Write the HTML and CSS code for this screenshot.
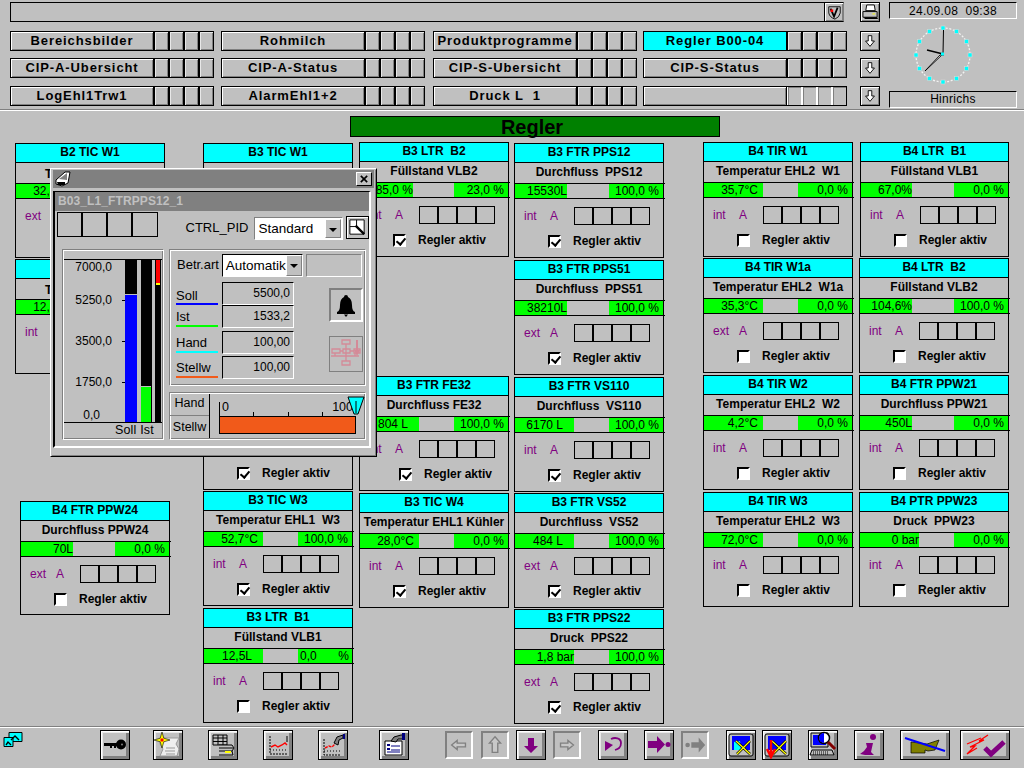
FILE: index.html
```html
<!DOCTYPE html>
<html lang="de">
<head>
<meta charset="utf-8">
<title>Regler</title>
<link rel="stylesheet" href="styles.css">
</head>
<body>
<header class="top">
  <div class="left">
    <div class="status">
      <div class="field"><button class="shield"><svg viewBox="0 0 17 17"><path d="M2 2h13v7q-1 5-6 7q-6-2-7-7z" fill="#c0c0c0" stroke="#000"/><path d="M4 4l4 9 4-10" fill="none" stroke="#000" stroke-width="2"/><path d="M4 5h3v3H4z" fill="#f00"/></svg></button></div>
      <button class="sq printer"><svg viewBox="0 0 18 18"><path d="M5 1h8l1 6H4z" fill="#fff" stroke="#000"/><path d="M1 8h15v6H1z" fill="#c0c0c0" stroke="#000"/><path d="M2 14h14l1 2H3z" fill="#000"/><path d="M11 10h3v1h-3z" fill="#ff0"/></svg></button>
    </div>
    <nav class="navrow">
      <div class="nav"><button class="main">Bereichsbilder</button><s></s><s></s><s></s><s></s></div>
      <div class="nav"><button class="main">Rohmilch</button><s></s><s></s><s></s><s></s></div>
      <div class="nav"><button class="main">Produktprogramme</button><s></s><s></s><s></s><s></s></div>
      <div class="nav"><button class="main act">Regler B00-04</button><s></s><s></s><s></s><s></s></div>
      <button class="sq"><svg viewBox="0 0 18 18"><path d="M7 3h4v6h3l-5 6-5-6h3z" fill="#fff" stroke="#000"/></svg></button>
    </nav>
    <nav class="navrow">
      <div class="nav"><button class="main">CIP-A-Ubersicht</button><s></s><s></s><s></s><s></s></div>
      <div class="nav"><button class="main">CIP-A-Status</button><s></s><s></s><s></s><s></s></div>
      <div class="nav"><button class="main">CIP-S-Ubersicht</button><s></s><s></s><s></s><s></s></div>
      <div class="nav"><button class="main">CIP-S-Status</button><s></s><s></s><s></s><s></s></div>
      <button class="sq"><svg viewBox="0 0 18 18"><path d="M7 3h4v6h3l-5 6-5-6h3z" fill="#fff" stroke="#000"/></svg></button>
    </nav>
    <nav class="navrow third">
      <div class="nav"><button class="main">LogEhl1Trw1</button><s></s><s></s><s></s><s></s></div>
      <div class="nav"><button class="main">AlarmEhl1+2</button><s></s><s></s><s></s><s></s></div>
      <div class="nav"><button class="main">Druck L  1</button><s></s><s></s><s></s><s></s></div>
      <div class="nav off"><button class="main"></button><s></s><s></s><s></s><s></s></div>
      <button class="sq"><svg viewBox="0 0 18 18"><path d="M7 3h4v6h3l-5 6-5-6h3z" fill="#fff" stroke="#000"/></svg></button>
    </nav>
  </div>
  <div class="right">
    <div class="info">24.09.08  09:38</div>
    <svg class="clock" viewBox="0 0 128 72">
      <circle cx="54" cy="36" r="27" fill="none" stroke="#f2f2f2" stroke-width="1.300" stroke-dasharray="2 1.600"/>
      <g fill="#00ffff" stroke="#d8d8d8" stroke-width=".6">
        <rect x="52" y="7" width="4" height="4"/><rect x="65.500" y="10.500" width="4" height="4"/><rect x="75.500" y="20.500" width="4" height="4"/><rect x="79" y="34" width="4" height="4"/><rect x="75.500" y="47.500" width="4" height="4"/><rect x="65.500" y="57.500" width="4" height="4"/><rect x="52" y="61" width="4" height="4"/><rect x="38.500" y="57.500" width="4" height="4"/><rect x="28.500" y="47.500" width="4" height="4"/><rect x="25" y="34" width="4" height="4"/><rect x="28.500" y="20.500" width="4" height="4"/><rect x="38.500" y="10.500" width="4" height="4"/>
      </g>
      <path d="M54 35 L54.500 11" stroke="#000" stroke-width="1"/>
      <path d="M54 35 L38 31" stroke="#000" stroke-width="1.600"/>
      <path d="M54 35 L36 52 L51 36 L55 36" stroke="#000" stroke-width=".9" fill="#fff"/>
      <rect x="52" y="33.500" width="3" height="3" fill="#00ffff"/>
    </svg>
    <div class="info low">Hinrichs</div>
  </div>
</header>
<div class="sep"></div>
<h1 class="title">Regler</h1>

<main class="board">
  <section class="col">
    <article class="card"><h3>B2 TIC W1</h3><p class="name drop">Temperatur  W1</p><div class="val"><span class="lv" style="width:59px">32,4°C</span><span class="rv"></span></div><div class="mode"><span class="m1">ext</span></div></article>
    <article class="card up"><h3></h3><p class="name drop">Temperatur  W2</p><div class="val"><span class="lv" style="width:59px">12,1°C</span><span class="rv"></span></div><div class="mode"><span class="m1">int</span></div></article>
    <article class="card shift"><h3>B4 FTR PPW24</h3><p class="name">Durchfluss PPW24</p><div class="val"><span class="lv flush" style="width:52px">70L</span><span class="rv">0,0 %</span></div><div class="mode"><span class="m1">ext</span><span class="m2">A</span><div class="seg"><u></u><u></u><u></u><u></u></div></div><div class="reg"><span class="cb"></span>Regler aktiv</div></article>
  </section>
  <section class="col">
    <article class="card"><h3>B3 TIC W1</h3></article>
    <article class="card up"></article>
    <article class="card up tail"><div class="reg"><span class="cb on"></span>Regler aktiv</div></article>
    <article class="card up"><h3>B3 TIC W3</h3><p class="name">Temperatur EHL1  W3</p><div class="val"><span class="lv" style="width:59px">52,7°C</span><span class="rv">100,0 %</span></div><div class="mode"><span class="m1">int</span><span class="m2">A</span><div class="seg"><u></u><u></u><u></u><u></u></div></div><div class="reg"><span class="cb on"></span>Regler aktiv</div></article>
    <article class="card"><h3>B3 LTR  B1</h3><p class="name">Füllstand VLB1</p><div class="val"><span class="lv wide" style="width:59px">12,5L</span><span class="rv split"><span>0,0</span><span>%</span></span></div><div class="mode"><span class="m1">int</span><span class="m2">A</span><div class="seg"><u></u><u></u><u></u><u></u></div></div><div class="reg"><span class="cb"></span>Regler aktiv</div></article>
  </section>
  <section class="col col3">
    <article class="card"><h3>B3 LTR  B2</h3><p class="name">Füllstand VLB2</p><div class="val"><span class="lv flush" style="width:53px">85,0 %</span><span class="rv">23,0 %</span></div><div class="mode"><span class="m1">int</span><span class="m2">A</span><div class="seg"><u></u><u></u><u></u><u></u></div></div><div class="reg"><span class="cb on"></span>Regler aktiv</div></article>
    <article class="card after-gap"><h3>B3 FTR FE32</h3><p class="name">Durchfluss FE32</p><div class="val"><span class="lv wide" style="width:59px">804 L</span><span class="rv">100,0 %</span></div><div class="mode"><span class="m1">int</span><span class="m2">A</span><div class="seg"><u></u><u></u><u></u><u></u></div></div><div class="reg inset"><span class="cb on"></span>Regler aktiv</div></article>
    <article class="card"><h3>B3 TIC W4</h3><p class="name">Temperatur EHL1 Kühler</p><div class="val"><span class="lv" style="width:59px">28,0°C</span><span class="rv">0,0 %</span></div><div class="mode"><span class="m1">int</span><span class="m2">A</span><div class="seg"><u></u><u></u><u></u><u></u></div></div><div class="reg"><span class="cb on"></span>Regler aktiv</div></article>
  </section>
  <section class="col">
    <article class="card"><h3>B3 FTR PPS12</h3><p class="name">Durchfluss  PPS12</p><div class="val"><span class="lv flush" style="width:52px">15530L</span><span class="rv">100,0 %</span></div><div class="mode"><span class="m1">int</span><span class="m2">A</span><div class="seg"><u></u><u></u><u></u><u></u></div></div><div class="reg"><span class="cb on"></span>Regler aktiv</div></article>
    <article class="card"><h3>B3 FTR PPS51</h3><p class="name">Durchfluss  PPS51</p><div class="val"><span class="lv flush" style="width:52px">38210L</span><span class="rv">100,0 %</span></div><div class="mode"><span class="m1">ext</span><span class="m2">A</span><div class="seg"><u></u><u></u><u></u><u></u></div></div><div class="reg"><span class="cb on"></span>Regler aktiv</div></article>
    <article class="card"><h3>B3 FTR VS110</h3><p class="name">Durchfluss  VS110</p><div class="val"><span class="lv wide" style="width:59px">6170 L</span><span class="rv">100,0 %</span></div><div class="mode"><span class="m1">int</span><span class="m2">A</span><div class="seg"><u></u><u></u><u></u><u></u></div></div><div class="reg"><span class="cb on"></span>Regler aktiv</div></article>
    <article class="card up"><h3>B3 FTR VS52</h3><p class="name">Durchfluss  VS52</p><div class="val"><span class="lv wide" style="width:59px">484 L</span><span class="rv">100,0 %</span></div><div class="mode"><span class="m1">ext</span><span class="m2">A</span><div class="seg"><u></u><u></u><u></u><u></u></div></div><div class="reg"><span class="cb on"></span>Regler aktiv</div></article>
    <article class="card up"><h3>B3 FTR PPS22</h3><p class="name">Druck  PPS22</p><div class="val"><span class="lv flush" style="width:59px">1,8 bar</span><span class="rv">100,0 %</span></div><div class="mode"><span class="m1">ext</span><span class="m2">A</span><div class="seg"><u></u><u></u><u></u><u></u></div></div><div class="reg"><span class="cb on"></span>Regler aktiv</div></article>
  </section>
  <section class="col">
    <article class="card"><h3>B4 TIR W1</h3><p class="name">Temperatur EHL2  W1</p><div class="val"><span class="lv" style="width:59px">35,7°C</span><span class="rv">0,0 %</span></div><div class="mode"><span class="m1">int</span><span class="m2">A</span><div class="seg"><u></u><u></u><u></u><u></u></div></div><div class="reg"><span class="cb"></span>Regler aktiv</div></article>
    <article class="card up"><h3>B4 TIR W1a</h3><p class="name">Temperatur EHL2  W1a</p><div class="val"><span class="lv" style="width:59px">35,3°C</span><span class="rv">0,0 %</span></div><div class="mode"><span class="m1">ext</span><span class="m2">A</span><div class="seg"><u></u><u></u><u></u><u></u></div></div><div class="reg"><span class="cb"></span>Regler aktiv</div></article>
    <article class="card"><h3>B4 TIR W2</h3><p class="name">Temperatur EHL2  W2</p><div class="val"><span class="lv" style="width:59px">4,2°C</span><span class="rv">0,0 %</span></div><div class="mode"><span class="m1">int</span><span class="m2">A</span><div class="seg"><u></u><u></u><u></u><u></u></div></div><div class="reg"><span class="cb"></span>Regler aktiv</div></article>
    <article class="card"><h3>B4 TIR W3</h3><p class="name">Temperatur EHL2  W3</p><div class="val"><span class="lv" style="width:59px">72,0°C</span><span class="rv">0,0 %</span></div><div class="mode"><span class="m1">int</span><span class="m2">A</span><div class="seg"><u></u><u></u><u></u><u></u></div></div><div class="reg"><span class="cb"></span>Regler aktiv</div></article>
  </section>
  <section class="col">
    <article class="card first-off"><h3>B4 LTR  B1</h3><p class="name">Füllstand VLB1</p><div class="val"><span class="lv flush" style="width:51px">67,0%</span><span class="rv">0,0 %</span></div><div class="mode"><span class="m1">int</span><span class="m2">A</span><div class="seg"><u></u><u></u><u></u><u></u></div></div><div class="reg"><span class="cb"></span>Regler aktiv</div></article>
    <article class="card up"><h3>B4 LTR  B2</h3><p class="name">Füllstand VLB2</p><div class="val"><span class="lv flush" style="width:52px">104,6%</span><span class="rv">100,0 %</span></div><div class="mode"><span class="m1">int</span><span class="m2">A</span><div class="seg"><u></u><u></u><u></u><u></u></div></div><div class="reg"><span class="cb"></span>Regler aktiv</div></article>
    <article class="card"><h3>B4 FTR PPW21</h3><p class="name">Durchfluss PPW21</p><div class="val"><span class="lv flush" style="width:52px">450L</span><span class="rv">0,0 %</span></div><div class="mode"><span class="m1">int</span><span class="m2">A</span><div class="seg"><u></u><u></u><u></u><u></u></div></div><div class="reg"><span class="cb"></span>Regler aktiv</div></article>
    <article class="card"><h3>B4 PTR PPW23</h3><p class="name">Druck  PPW23</p><div class="val"><span class="lv flush" style="width:59px">0 bar</span><span class="rv">0,0 %</span></div><div class="mode"><span class="m1">int</span><span class="m2">A</span><div class="seg"><u></u><u></u><u></u><u></u></div></div><div class="reg"><span class="cb"></span>Regler aktiv</div></article>
  </section>
</main>

<div class="sep"></div>
<footer class="tools">
  <svg class="winicon" viewBox="0 0 20 15"><path d="M6 .5h13v9H6z" fill="#0ff" stroke="#000"/><path d="M1 5.500h9v9H1z" fill="#0ff" stroke="#000"/><path d="M8 8l4-4 4 4M3 13l2-3 3 3" fill="none" stroke="#000" stroke-width="1.400"/></svg>
  <button class="tb m65"><svg viewBox="0 0 28 28"><path d="M3 12h14v3h-2v2h-2v-2h-2v2H9v-2H3z" fill="#000"/><circle cx="20" cy="13.500" r="5" fill="#000"/><circle cx="21" cy="13.500" r="1" fill="#808080"/></svg></button>
  <button class="tb m23"><svg viewBox="0 0 28 28"><path d="M6 7h19l-3 6 3 5-2 7H6l3-7-3-5z" fill="#eee" stroke="#999"/><path d="M12 17h9M11 20h10M12 23h9" stroke="#999"/><path d="M8 1l1.800 6.200L16 9l-6.200 1.800L8 17l-1.800-6.200L0 9l6.200-1.800z" fill="#ff0" stroke="#000" stroke-width=".6"/><rect x="6.500" y="7.500" width="3" height="3" fill="#f00"/></svg></button>
  <button class="tb m25"><svg viewBox="0 0 28 28"><path d="M4 4h14v10H4z" fill="#c0c0c0" stroke="#000"/><path d="M4 7h14M4 10.500h14M9 4v10M14 4v10" stroke="#000"/><path d="M10 14h13l2 3-2 3 1 4H10" fill="#c0c0c0" stroke="#000"/><path d="M10 17h14M10 20h13" stroke="#000"/><path d="M16 20h6v2h-6z" fill="#ff0"/></svg></button>
  <button class="tb m25"><svg viewBox="0 0 28 28"><path d="M6 5v18h18" fill="none" stroke="#000" stroke-dasharray="2 1"/><path d="M6 19h18" stroke="#000" stroke-dasharray="1 2"/><path d="M7 16l4-2 3 2 4-2 3-2 2 2" fill="none" stroke="#f00" stroke-width="1.400"/><path d="M23 5v6" stroke="#000"/></svg></button>
  <button class="tb m25"><svg viewBox="0 0 28 28"><path d="M5 8v16h16" fill="none" stroke="#000" stroke-dasharray="2 1"/><path d="M5 20h16" stroke="#000" stroke-dasharray="1 2"/><path d="M6 17l4-2 3 1 3-3" fill="none" stroke="#f00" stroke-width="1.400" stroke-dasharray="3 1"/><path d="M15 12l3-6 6-2v3l-4 2-1 5z" fill="#808080" stroke="#000"/><path d="M25 3v5" stroke="#000080" stroke-width="2"/></svg></button>
  <button class="tb m31"><svg viewBox="0 0 28 28"><path d="M5 10h17v14H5z" fill="#fff" stroke="#000"/><path d="M7 13h3v2H7zM7 17h3v2H7z" fill="#000080"/><path d="M11 15h9M11 19h9M7 21h13" stroke="#000080"/><path d="M11 10l3-4 7-2h3v4h-6l-2 3z" fill="#808080" stroke="#000"/><path d="M22 2h3v7h-3z" fill="#000080"/></svg></button>
  <button class="tb dis m36"><svg viewBox="0 0 26 26"><path d="M5 13l6-5v3h9v4h-9v3z" fill="#c8c8c8" stroke="#808080" stroke-width="1.500"/></svg></button>
  <button class="tb dis m8"><svg viewBox="0 0 26 26"><path d="M13 4l6 7h-3v10h-6V11H7z" fill="#c8c8c8" stroke="#808080" stroke-width="1.500"/></svg></button>
  <button class="tb m7"><svg viewBox="0 0 28 28"><path d="M11 7h6v8h4l-7 7-7-7h4z" fill="#800080"/></svg></button>
  <button class="tb dis m7"><svg viewBox="0 0 26 26"><path d="M20 13l-6-5v3H6v4h8v3z" fill="#c8c8c8" stroke="#808080" stroke-width="1.500"/></svg></button>
  <button class="tb m17"><svg viewBox="0 0 28 28"><path d="M12 8c4-2 10-1 10 4s-3 6-6 7" fill="none" stroke="#800080" stroke-width="1.800"/><path d="M6 10l8 4-8 6z" fill="#800080"/></svg></button>
  <button class="tb m16"><svg viewBox="0 0 28 28"><path d="M3 10h9V5l8 8.500-8 8.500v-5H3z" fill="#800080"/><circle cx="23" cy="13.500" r="2.500" fill="#800080"/></svg></button>
  <button class="tb dis m7"><svg viewBox="0 0 26 26"><circle cx="5" cy="13" r="2.500" fill="#808080"/><path d="M9 10h8V5l7 8-7 8v-5H9z" fill="#808080"/></svg></button>
  <button class="tb m17"><svg viewBox="0 0 28 28"><path d="M4 3h20q2 0 2 2v18q0 2-2 2H4q-2 0-2-2V5q0-2 2-2z" fill="#c0c0c0" stroke="#000"/><path d="M5 5h18v14H5z" fill="#0000ff"/><path d="M7 11l6-1 1 9H7z" fill="#0ff"/><path d="M9 10l14 13M10 23L23 10" stroke="#000" stroke-width="2.500"/><path d="M9 10l14 13M10 23L23 10" stroke="#ff0" stroke-width="1.300"/></svg></button>
  <button class="tb m6"><svg viewBox="0 0 28 28"><path d="M4 3h20q2 0 2 2v18q0 2-2 2H4q-2 0-2-2V5q0-2 2-2z" fill="#c0c0c0" stroke="#000"/><path d="M5 5h18v14H5z" fill="#0000ff"/><path d="M9 10l14 13M10 23L23 10" stroke="#000" stroke-width="2.500"/><path d="M9 10l14 13M10 23L23 10" stroke="#ff0" stroke-width="1.300"/><path d="M8 9v14m-4-5l4 8 4-8" fill="none" stroke="#f00" stroke-width="2.500"/></svg></button>
  <button class="tb m16"><svg viewBox="0 0 28 28"><path d="M2 2h17v14H2z" fill="#c0c0c0" stroke="#000"/><path d="M4 4h13v10H4z" fill="#0000ff"/><path d="M3 19h20l2 5H1z" fill="#c0c0c0" stroke="#000"/><path d="M4 21h15M4 23h15" stroke="#000" stroke-dasharray="1 1"/><circle cx="15" cy="7" r="5.500" fill="#fff" stroke="#000" stroke-width="1.500"/><path d="M15 2a5 5 0 0 0 0 10z" fill="#0000ff"/><path d="M19 11l7 7" stroke="#800000" stroke-width="3"/></svg></button>
  <button class="tb m16"><svg viewBox="0 0 28 28"><circle cx="18" cy="6" r="3" fill="#800080"/><path d="M11 12h7l-2 9 3 3h-9l-5-1 4-3 3-4z" fill="#800080"/></svg></button>
  <button class="tb wide m16"><svg viewBox="0 0 48 28"><path d="M10 11l16 2 12-4-4 10-7 1-3-1v3H10z" fill="#808000" stroke="#000" stroke-width=".7"/><path d="M4 7l40 13" stroke="#0000ff" stroke-width="2"/></svg></button>
  <button class="tb wide m10"><svg viewBox="0 0 48 28"><path d="M24 17l6 6 13-12" fill="none" stroke="#800080" stroke-width="5"/><path d="M27 4l-9 6 5-1-14 7 5-1-8 8 10-6" fill="none" stroke="#f00" stroke-width="1.300"/><path d="M6 13l14-6" stroke="#f00" stroke-width="1.300"/></svg></button>
</footer>

<aside class="win">
  <div class="wintitle">
    <svg class="wi" viewBox="0 0 16 16"><path d="M1 9l9-8h5l-2 11-6 3-6-2z" fill="#fff" stroke="#000"/><path d="M4 8l8-6v7z" fill="#808080"/><path d="M2 11h8v3H3z" fill="#000"/></svg>
    <button class="close"><svg viewBox="0 0 13 11"><path d="M3 2l7 7M10 2l-7 7" stroke="#000" stroke-width="1.800"/></svg></button>
  </div>
  <div class="pane">
    <div class="panetitle">B03_L1_FTRPPS12_1</div>
    <div class="ctrlrow">
      <div class="seg big"><u></u><u></u><u></u><u></u></div>
      <span class="ctrllabel">CTRL_PID</span>
      <div class="select std"><span>Standard</span><i></i></div>
      <button class="zoombtn"><svg viewBox="0 0 20 20"><path d="M2 2h15v15H2z" fill="#fff" stroke="#000"/><path d="M2 9h7V2" fill="#fff" stroke="#000"/><path d="M8 8l9 9" stroke="#000" stroke-width="2.500"/></svg></button>
    </div>
    <div class="main-area">
      <div class="group chart">
        <div class="plot">
          <div class="scale"><span>7000,0</span><span>5250,0</span><span>3500,0</span><span>1750,0</span><span>0,0</span></div>
          <div class="bar"><div class="fill blue" style="height:128px"></div></div>
          <div class="bar b2"><div class="fill grn" style="height:36px"></div></div>
          <div class="bar b3"><div class="rd"></div><div class="yl"></div></div>
        </div>
        <div class="legend">Soll Ist</div>
      </div>
      <div class="rightcol">
        <div class="group params">
          <div class="betr">
            <span class="betrlabel">Betr.art</span>
            <div class="select auto"><span>Automatik</span><i></i></div>
            <div class="blank"></div>
          </div>
          <div class="paramsbody">
            <div class="rows">
              <div class="prow"><span class="plabel l-blue">Soll</span><span class="pval">5500,0</span></div>
              <div class="prow"><span class="plabel l-green">Ist</span><span class="pval">1533,2</span></div>
              <div class="prow gapped"><span class="plabel l-cyan">Hand</span><span class="pval">100,00</span></div>
              <div class="prow gapped"><span class="plabel l-orange">Stellw</span><span class="pval">100,00</span></div>
            </div>
            <div class="side">
              <div class="sunk bell"><svg viewBox="0 0 30 30"><path d="M15 5q2 0 2 2q4 2 4 8t3 7v2H6v-2q3-1 3-7t4-8q0-2 2-2z" fill="#000"/><path d="M13 24.500h4l-2 2.500z" fill="#000"/></svg></div>
              <div class="sunk net"><svg viewBox="0 0 32 32"><g fill="none" stroke="#d48a98" stroke-width="1.300"><path d="M12 3h8v4h-8zM2 12h8v4H2zM13 12h7v4h-7zM24 12h6v4h-6zM12 24h8v4h-8zM1 19h28M16 7v17M5 16v3M25 16v3M10 14h3M20 14h4"/></g><path d="M26 3v10h-2l3 6 3-6h-2V3z" fill="#d48a98"/></svg></div>
            </div>
          </div>
        </div>
        <div class="group handbox">
          <div class="hands"><span>Hand</span><span>Stellw</span></div>
          <div class="slider">
            <div class="ticks"><span class="t0">0</span><span class="t100">100</span><em></em><em></em><em></em></div>
            <div class="orange"></div>
            <svg class="pointer" viewBox="0 0 18 20"><path d="M1 1h16l-6 17h-4z" fill="#00ffff" stroke="#000"/><path d="M9 5v12" stroke="#000"/></svg>
          </div>
        </div>
      </div>
    </div>
  </div>
</aside>
</body>
</html>
```

FILE: styles.css
```css
* { box-sizing: border-box; }
html, body { margin: 0; padding: 0; }
body {
  position: relative;
  width: 1024px;
  height: 768px;
  overflow: hidden;
  background: #c0c0c0;
  font-family: "Liberation Sans", Arial, sans-serif;
  font-size: 12px;
  color: #000;
}
button { margin: 0; padding: 0; font-family: inherit; background: #c0c0c0; color: #000; border: 0; }

/* header */
.top { display: flex; height: 109px; }
.left { width: 880px; padding-left: 10px; }
.status { display: flex; margin-top: 2px; }
.field {
  width: 834px; height: 20px;
  border: 1px solid #000; border-right-color: #808080;
  display: flex; justify-content: flex-end;
}
.shield {
  width: 19px; height: 18px;
  border-left: 1px solid #000;
  box-shadow: inset 1px 1px 0 #fff, inset -1px -1px 0 #808080;
  display: flex; align-items: center; justify-content: center;
}
.shield svg { width: 15px; height: 15px; }
.sq {
  width: 20px; height: 20px;
  border: 1px solid #000;
  box-shadow: inset 1px 1px 0 #fff, inset -1px -1px 0 #808080;
  display: flex; align-items: center; justify-content: center;
}
.sq svg { width: 16px; height: 16px; display: block; }
.printer { margin-left: 16px; }
.printer svg { width: 17px; height: 17px; }
.navrow { display: flex; margin-top: 7px; height: 20px; white-space: pre; }
.status + .navrow { margin-top: 9px; }
.navrow.third { margin-top: 8px; }
.nav { display: flex; width: 204px; height: 20px; border: 1px solid #000; }
.navrow .nav:nth-child(1) { margin-right: 7px; }
.navrow .nav:nth-child(2) { margin-right: 8px; }
.navrow .nav:nth-child(3) { margin-right: 6px; }
.navrow .nav:nth-child(4) { margin-right: 13px; }
.main {
  width: 143px; height: 18px;
  border-right: 1px solid #000;
  box-shadow: inset 1px 1px 0 #fff, inset -1px -1px 0 #808080;
  font-size: 13px; font-weight: 700; letter-spacing: .9px;
  white-space: pre; line-height: 16px;
}
.main.act { background: #00ffff; box-shadow: none; }
.nav s {
  display: block; flex: 1; text-decoration: none;
  border-left: 1px solid #000; border-right: 1px solid #000;
  box-shadow: inset 1px 1px 0 #e8e8e8, inset -1px -1px 0 #808080;
}
.nav s:last-child { border-right: 0; }
.nav.off s { border-color: #fff; box-shadow: inset 1px 1px 0 #808080; }
.right { margin-left: 9px; width: 128px; }
.info {
  height: 17px; text-align: center; line-height: 16px; white-space: pre;
  border: 1px solid; border-color: #000 #fff #fff #000;
  letter-spacing: .3px;
}
.info.low { line-height: 14px; }
.right .info:first-child { margin-top: 2px; }
.clock { display: block; width: 128px; height: 72px; }
.sep { height: 2px; background: linear-gradient(#808080 50%, #fff 50%); }

.title {
  width: 370px; height: 21px; margin: 5px 0 0 350px;
  background: #008000; border: 1px solid #000;
  font-size: 20px; line-height: 20px; font-weight: 700; text-align: center; padding-right: 6px;
}

/* board */
.board {
  display: grid;
  grid-template-columns: 188px 156px 155px 189px 156px 150px;
  padding: 5px 0 0 15px;
  height: 589px;
}
.col { display: flex; flex-direction: column; gap: 2px; }
.col:first-child .shift { margin: 125px 0 0 5px; height: 114px; }
.col3 .after-gap { margin-top: 117px; }
.card {
  width: 150px; height: 115px; flex: none;
  border: 1px solid #000;
}
.col:nth-child(2) .card:first-child,
.col:nth-child(1) .card:first-child,
.col:nth-child(4) .card:first-child { margin-top: 1px; }
.card.up { margin-top: -1px; }
.card.tail { display: flex; flex-direction: column; justify-content: flex-end; padding-bottom: 9px; }
.card.first-off { margin-left: 1px; width: 149px; }
.card h3 {
  margin: 0; height: 19px;
  background: #00ffff; border-bottom: 1px solid #000;
  font-size: 12px; font-weight: 700; text-align: center; line-height: 16px; white-space: pre;
}
.name {
  margin: 0; height: 20px;
  font-weight: 700; text-align: center; line-height: 19px; white-space: pre;
}
.name.drop { line-height: 23px; }
.val {
  display: flex; justify-content: space-between; height: 16px; line-height: 14px;
  margin-right: -2px; padding-right: 2px;
  border-top: 1px solid #000; border-bottom: 1px solid #000;
  white-space: pre;
}
.lv { background: #00ff00; text-align: right; padding-right: 5px; }
.lv.flush { padding-right: 0; }
.lv.wide { padding-right: 11px; }
.rv { background: #00ff00; width: 54px; text-align: right; padding-right: 4px; }
.rv.split { display: flex; justify-content: space-between; padding: 0 3px 0 2px; }
.mode { display: flex; align-items: center; height: 18px; margin-top: 8px; padding-left: 9px; color: #800080; }
.m1 { width: 26px; }
.m2 { width: 24px; }
.seg { display: flex; width: 76px; height: 18px; border: 1px solid #000; }
.seg u { display: block; flex: 1; text-decoration: none; border-left: 2px solid #000; }
.seg u:first-child { border-left: 0; }
.reg { display: flex; align-items: center; height: 14px; margin-top: 9px; padding-left: 33px; font-weight: 700; white-space: pre; }
.reg.inset { padding-left: 39px; }
.cb {
  position: relative; width: 13px; height: 13px; margin-right: 12px;
  background: #fff; border: 2px solid; border-color: #000 #fff #fff #000;
}
.cb.on::after {
  content: ""; position: absolute; left: 3px; top: 0; width: 4px; height: 7px;
  border: solid #000; border-width: 0 2px 2px 0; transform: rotate(40deg);
}

/* footer */
.tools { display: flex; align-items: center; height: 34px; }
.winicon { width: 20px; height: 15px; margin: -11px 0 0 3px; flex: none; }
.tb {
  width: 30px; height: 30px; flex: none;
  border: 1px solid #000;
  box-shadow: inset 1px 1px 0 #fff, inset 2px 2px 0 #e8e8e8, inset -3px -3px 0 #808080;
}
.tb svg { display: block; width: 28px; height: 28px; }
.tb.wide { width: 50px; }
.tb.wide svg { width: 48px; }
.tb.dis {
  width: 28px; height: 28px;
  border: 2px solid; border-color: #808080 #fff #fff #808080;
  box-shadow: none;
}
.tb.dis svg { width: 24px; height: 24px; }
.m6 { margin-left: 6px; } .m7 { margin-left: 7px; } .m8 { margin-left: 8px; }
.m10 { margin-left: 10px; } .m16 { margin-left: 16px; } .m17 { margin-left: 17px; }
.m23 { margin-left: 23px; } .m25 { margin-left: 25px; } .m31 { margin-left: 31px; }
.m36 { margin-left: 36px; } .m65 { margin-left: 77px; }

/* floating window */
.win {
  position: absolute; left: 50px; top: 168px; width: 327px; height: 289px;
  background: #c0c0c0;
  border: 1px solid #000; border-color: #fff #000 #000 #fff;
  box-shadow: inset 1px 1px 0 #c0c0c0, inset -1px -1px 0 #808080;
  padding: 1px;
}
.wintitle {
  display: flex; justify-content: space-between; align-items: center;
  height: 18px; margin: 0 1px; padding: 0 2px;
  background: #808080;
}
.wi { width: 16px; height: 16px; }
.close {
  width: 16px; height: 14px; display: flex; align-items: center; justify-content: center;
  border: 1px solid #000; border-color: #fff #000 #000 #fff;
}
.close svg { width: 12px; height: 10px; }
.pane {
  width: 318px; height: 257px; margin: 3px 0 0 1px;
  border: 2px solid; border-color: #000 #fff #fff #000; border-width: 1px 2px 2px 2px;
}
.panetitle {
  height: 19px; background: #808080; color: #c0c0c0;
  font-size: 12px; font-weight: 700; letter-spacing: .1px; line-height: 18px; padding-left: 3px;
}
.ctrlrow { display: flex; align-items: flex-start; height: 38px; padding-left: 2px; }
.seg.big { width: 101px; height: 25px; margin-top: 1px; }
.ctrllabel { font-size: 13px; margin: 9px 6px 0 28px; }
.select {
  display: flex; justify-content: space-between; align-items: center;
  background: #fff; font-size: 13.500px; padding: 0 1px 0 3px;
}
.select i {
  position: relative; display: block; flex: none; background: #c0c0c0;
  border: 1px solid; border-color: #fff #808080 #808080 #fff;
}
.select i::after {
  content: ""; position: absolute; left: 3px; top: 8px;
  border: 4px solid transparent; border-top: 4px solid #000; border-bottom: 0;
}
.std { width: 89px; height: 23px; margin-top: 6px; border: 1px solid; border-color: #808080 #fff #fff #808080; }
.std i { width: 16px; height: 19px; }
.zoombtn {
  width: 23px; height: 23px; margin: 5px 0 0 3px; padding: 1px;
  border: 1px solid #000; box-shadow: inset 1px 1px 0 #fff;
}
.zoombtn svg { display: block; width: 19px; height: 19px; }
.main-area { display: flex; padding-left: 7px; }
.group {
  border: 1px solid; border-color: #808080 #fff #fff #808080;
  box-shadow: inset 1px 1px 0 #fff, inset -1px -1px 0 #808080;
}
.chart { width: 102px; height: 191px; padding: 9px 1px 0; }
.plot { display: flex; height: 164px; border-top: 1px solid #000; border-bottom: 1px solid #000; padding-right: 1px; }
.scale { position: relative; width: 61px; padding-right: 13px; text-align: right; }
.scale span { display: block; height: 41px; line-height: 14px; }
.scale span:first-child, .scale span:nth-child(4) { height: 33px; }
.scale span:last-child { padding-right: 12px; }
.scale span:nth-child(2)::after, .scale span:nth-child(3)::after, .scale span:nth-child(4)::after {
  content: ""; position: absolute; right: 0; width: 3px; height: 1px; background: #000; margin-top: 7px;
}
.bar { display: flex; flex-direction: column; justify-content: flex-end; width: 12px; background: #000; }
.b2 { width: 11px; margin-left: 4px; }
.b3 { width: 6px; margin-left: 3px; justify-content: flex-start; padding: 0 1px; }
.fill { border-top: 1px solid #c0c0c0; }
.blue { background: #0000ff; }
.grn { background: #00ff00; margin-right: 1px; }
.rd { height: 23px; background: #ff0000; }
.yl { height: 2px; background: #ffff00; }
.legend { text-align: right; padding-right: 8px; line-height: 14px; font-size: 12.500px; letter-spacing: .2px; }
.rightcol { margin-left: 5px; width: 197px; }
.params { height: 137px; padding: 4px 3px 0 6px; }
.betr { display: flex; align-items: flex-start; height: 28px; }
.betrlabel { font-size: 13px; margin: 3px 2px 0 1px; width: 44px; }
.auto { width: 81px; height: 23px; border: 1px solid; border-color: #000 #fff #fff #000; padding-right: 0; }
.auto i { width: 16px; height: 21px; }
.blank { width: 58px; height: 23px; margin-left: 3px; border: 1px solid; border-color: #808080 #fff #fff #808080; }
.paramsbody { display: flex; }
.rows { width: 118px; }
.prow { display: flex; height: 23px; }
.prow.gapped { margin-top: 2px; }
.prow:nth-child(3) { margin-top: 3px; }
.plabel { width: 46px; height: 23px; font-size: 13px; line-height: 14px; padding-top: 5px; position: relative; }
.plabel::after { content: ""; position: absolute; left: 0; top: 20px; width: 42px; height: 2px; }
.l-blue { padding-top: 7px; }
.l-blue::after { background: #0000ff; top: 21px; }
.l-green::after { background: #00ff00; }
.l-cyan::after { background: #00ffff; }
.l-orange::after { background: #f15a1a; }
.pval {
  width: 72px; height: 23px; text-align: right; padding-right: 3px; line-height: 21px;
  border: 1px solid; border-color: #000 #fff #fff #000;
}
.side { margin-left: 35px; margin-top: 6px; }
.sunk { width: 34px; height: 34px; border: 2px solid; border-color: #808080 #fff #fff #808080; }
.sunk svg { display: block; width: 30px; height: 30px; }
.net { height: 36px; margin-top: 14px; border-width: 1px; border-color: #808080; }
.net svg { width: 32px; height: 32px; }
.handbox { display: flex; height: 48px; margin-top: 6px; }
.hands {
  width: 40px; border-right: 1px solid #000; margin: 1px 0; display: flex; flex-direction: column;
  font-size: 12.500px; text-align: center;
}
.hands span { height: 22px; line-height: 18px; }
.hands span + span { border-top: 1px solid #808080; line-height: 22px; height: 24px; }
.slider { position: relative; flex: 1; padding: 4px 0 0 9px; }
.ticks { position: relative; width: 137px; height: 19px; font-size: 12.500px; }
.ticks::before { content: ""; position: absolute; left: 0; bottom: 0; width: 1px; height: 14px; background: #000; }
.t0 { position: absolute; left: 3px; top: 3px; line-height: 14px; }
.t100 { position: absolute; right: 3px; top: 3px; line-height: 14px; }
.ticks em { position: absolute; bottom: 0; width: 1px; height: 4px; background: #000; }
.ticks em:nth-of-type(1) { left: 34px; }
.ticks em:nth-of-type(2) { left: 69px; }
.ticks em:nth-of-type(3) { left: 103px; }
.orange { width: 137px; height: 18px; background: #f15a1a; border: 1px solid #000; }
.pointer { position: absolute; left: 137px; top: 3px; width: 18px; height: 20px; }
```
